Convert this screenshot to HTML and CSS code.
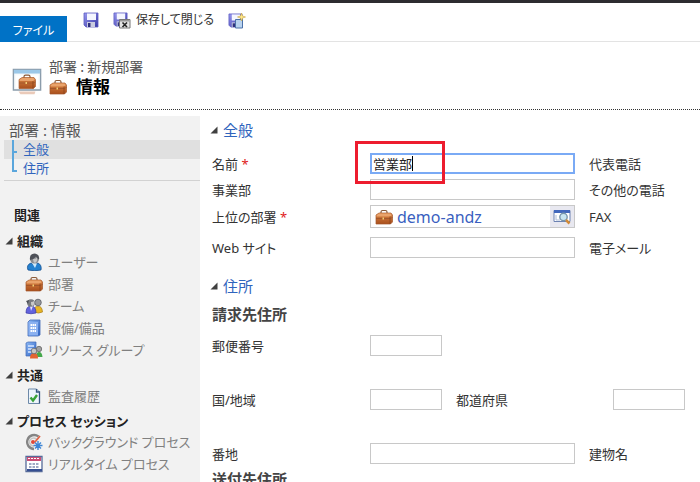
FILE: index.html
```html
<!DOCTYPE html>
<html lang="ja">
<head>
<meta charset="utf-8">
<title>部署 : 新規部署</title>
<link rel="stylesheet" href="styles.css">
</head>
<body>
<svg class="defs" aria-hidden="true">
  <defs>
    <linearGradient id="leather" x1="0" y1="0" x2="0" y2="1"><stop offset="0" stop-color="#d98445"/><stop offset="1" stop-color="#a94f1c"/></linearGradient>
    <linearGradient id="disk" x1="0" y1="0" x2="1" y2="1"><stop offset="0" stop-color="#9a9af0"/><stop offset="1" stop-color="#3535a5"/></linearGradient>
    <linearGradient id="sky" x1="0" y1="0" x2="1" y2="1"><stop offset="0" stop-color="#8fbaf5"/><stop offset="1" stop-color="#2b61c4"/></linearGradient>
  </defs>
  <symbol id="case" viewBox="0 0 18 16">
    <path d="M6 4.500V3q0-1.500 1.500-1.500h3q1.500 0 1.500 1.500v1.500" fill="none" stroke="#8a5a38" stroke-width="1.200"/>
    <path d="M1 6l3-2h12l1.500 2v7l-2 2H1z" fill="url(#leather)" stroke="#a5582b" stroke-width=".7"/>
    <path d="M1.500 6.300L4 4.500h11.500l1.300 1.800-1.800 1.200H1.500z" fill="#e9a36b"/>
    <path d="M1 9.500h14l2.500-1" fill="none" stroke="#96502a" stroke-width=".7"/>
    <path d="M15 7.500V15" stroke="#84401a" stroke-width=".7"/>
    <path d="M7.500 8.500H9v2H7.500z" fill="#f4cf74"/>
  </symbol>
  <symbol id="save" viewBox="0 0 16 16">
    <path d="M1 1h14v14H3l-2-2z" fill="url(#disk)" stroke="#5a5ac0" stroke-width=".8"/>
    <path d="M4 1.500h9V8H4z" fill="#f4f6ff"/>
    <path d="M4 10h8v5H4z" fill="#c9cbe0"/>
    <path d="M5 11h2.500v4H5z" fill="#30307e"/>
  </symbol>
  <symbol id="tri" viewBox="0 0 8 8"><path d="M7.500 0.500v7H.5z" fill="#404040"/></symbol>
</svg>

<div class="app">
  <header class="ribbon">
    <button class="file-tab" type="button">ファイル</button>
    <div class="tools">
      <button class="tool" type="button" aria-label="保存"><svg class="icon"><use href="#save"/></svg></button>
      <button class="tool" type="button">
        <svg class="icon-wide" viewBox="0 0 18 17"><use href="#save" width="15" height="15"/><path d="M6.500 7.500h10.500v8.500H6.500z" fill="#e4e4e4" stroke="#777"/><path d="M7 8h9.500v1.500H7z" fill="#999"/><path d="M9.500 10.500l4.500 4.500m0-4.500l-4.500 4.500" stroke="#222" stroke-width="1.600"/></svg>
        <span>保存して閉じる</span>
      </button>
      <button class="tool" type="button" aria-label="保存して新規作成">
        <svg class="icon-wide" viewBox="0 0 18 17"><use href="#save" y="1" width="15" height="15"/><path d="M7.500 7.500h7v8.500h-7z" fill="#b9d3ef" stroke="#4c71a8"/><path d="M13.500 1l1 3 3 1-3 1-1 3-1-3-3-1 3-1z" fill="#ffe98a" stroke="#c9a43b" stroke-width=".6"/></svg>
      </button>
    </div>
  </header>

  <div class="title-bar">
    <svg class="form-icon" viewBox="0 0 32 30"><path d="M1.500 1.500h29v22h-29z" fill="#f6fafc" stroke="#8b9cab" stroke-width="1.500"/><path d="M2 2h28v4H2z" fill="#9cc8e8"/><path d="M4 8h24v13H4z" fill="#fff"/><use href="#case" x="6" y="6" width="20" height="17"/><path d="M7 25h18l-1 3H9z" fill="#d69674" opacity=".5"/></svg>
    <div class="titles">
      <div class="record">部署 : 新規部署</div>
      <h1 class="form-name"><svg class="icon-case"><use href="#case"/></svg>情報</h1>
    </div>
  </div>

  <div class="body">
    <nav class="sidebar">
      <div class="side-title">部署 : 情報</div>
      <ul class="anchors">
        <li><a class="anchor current" href="#general">全般</a></li>
        <li><a class="anchor" href="#address">住所</a></li>
      </ul>
      <div class="related">関連</div>
      <h2 class="group"><svg class="tri"><use href="#tri"/></svg>組織</h2>
      <ul class="links">
        <li><a class="link" href="#users"><svg class="icon-side" viewBox="0 0 18 18"><path d="M3 17q-2-5 3-7l3 2 4-2q4 2 3 7-6 1.500-13 0z" fill="#2581cf" stroke="#175292" stroke-width=".8"/><path d="M7 10l3 5 2-4.500z" fill="#cde9fb"/><circle cx="9.500" cy="6" r="4.500" fill="#8b8d91"/><path d="M5 7q-1-6.500 5-6.500 5 1 4 6-2-1-3-3-2 3-6 3.500z" fill="#4e5158"/><path d="M8 6q3 0 4-1.500.8 4-2 5.500-2-1-2-4z" fill="#c6c6c6"/></svg>ユーザー</a></li>
        <li><a class="link" href="#units"><svg class="icon-side"><use href="#case"/></svg>部署</a></li>
        <li><a class="link" href="#teams"><svg class="icon-side" viewBox="0 0 18 18"><path d="M9 15q0-6 4-6t4.500 6q-4 2-8.500 0z" fill="#e8b525" stroke="#a87b17" stroke-width=".7"/><circle cx="13" cy="5.500" r="3.300" fill="#96989c" stroke="#5d6066" stroke-width=".8"/><path d="M1 16q0-7 5-7t5 7q-5 1.500-10 0z" fill="#6262de" stroke="#3b3ba4" stroke-width=".7"/><path d="M5 9l1 5 2-5z" fill="#e5e7ff"/><circle cx="6" cy="6" r="3.800" fill="#777a80"/><path d="M6 5q2 0 3-1 1 4-1.500 5Q5.500 8 6 5z" fill="#c9c9c9"/><path d="M1 4l3-1-1 4z" fill="#4b4e55"/></svg>チーム</a></li>
        <li><a class="link" href="#facilities"><svg class="icon-side" viewBox="0 0 18 18"><path d="M3 3l2-2h10v15l-2 1H3z" fill="url(#sky)" stroke="#4169b5" stroke-width=".8"/><path d="M3.500 3H13v13.500H3.500z" fill="#8bb1f0"/><path d="M5.500 6h5.500M5.500 9h5.500M5.500 12h5.500" stroke="#fff" stroke-width="1.800" stroke-dasharray="1.500 .5"/></svg>設備/備品</a></li>
        <li><a class="link" href="#resources"><svg class="icon-side" viewBox="0 0 18 18"><path d="M1 2l2-1h8v14H1z" fill="url(#sky)" stroke="#4169b5" stroke-width=".7"/><path d="M3 5h6M3 8h6M3 11h6" stroke="#d9e8ff" stroke-width="1.300"/><path d="M11 16q0-5 3-5t3.500 5z" fill="#45a84b"/><circle cx="14" cy="8" r="2.700" fill="#a1a1a1" stroke="#666" stroke-width=".8"/><path d="M5 17.500q0-5.500 4-5.500t4 5.500z" fill="#e46432"/><circle cx="9" cy="10" r="2.800" fill="#c7c7c7" stroke="#666" stroke-width=".8"/></svg>リソース グループ</a></li>
      </ul>
      <h2 class="group"><svg class="tri"><use href="#tri"/></svg>共通</h2>
      <ul class="links">
        <li><a class="link" href="#audit"><svg class="icon-side" viewBox="0 0 18 18"><path d="M3.500 2h8l3 3v11.500h-11z" fill="#edf4fc" stroke="#6d89a8"/><path d="M11.500 2v3h3v11.500" fill="none" stroke="#34557f" stroke-width="1.300"/><path d="M5.500 10.500l2.500 3 4-5.500" fill="none" stroke="#39a237" stroke-width="2.400"/></svg>監査履歴</a></li>
      </ul>
      <h2 class="group"><svg class="tri"><use href="#tri"/></svg>プロセス セッション</h2>
      <ul class="links">
        <li><a class="link" href="#background"><svg class="icon-side" viewBox="0 0 18 18"><path d="M13.500 3.500A7 7 0 1 0 9 16" fill="none" stroke="#858585" stroke-width="2.400"/><path d="M12 7a4 4 0 1 0-3 6" fill="none" stroke="#c6c6c6" stroke-width="1.500"/><circle cx="8" cy="9" r="2" fill="#df4938"/><path d="M10 9l5-6" stroke="#e06548" stroke-width="1.800"/><path d="M13 8v9M8.500 12.500h9M10 9.500l6 6m0-6l-6 6" stroke="#3e86d5" stroke-width="1.400"/></svg>バックグラウンド プロセス</a></li>
        <li><a class="link" href="#realtime"><svg class="icon-side" viewBox="0 0 18 18"><path d="M1 1.500h16v15H1z" fill="#fff" stroke="#566a99" stroke-width="1.300"/><path d="M2 2h14v4H2z" fill="#c94d75"/><path d="M3 3.500h12" stroke="#fff" stroke-dasharray="2 1"/><path d="M4 9h10M4 12h10" stroke="#7f8db1" stroke-width="1.700" stroke-dasharray="2.500 1"/><path d="M2 15h15" stroke="#364f92" stroke-width="2"/></svg>リアルタイム プロセス</a></li>
      </ul>
    </nav>

    <main class="form">
      <h2 class="section" id="general"><svg class="tri"><use href="#tri"/></svg>全般</h2>
      <div class="row">
        <label for="name">名前 <span class="required">*</span></label>
        <div class="field marked"><input class="focused" id="name" type="text" value="営業部"><span class="caret"></span></div>
        <span class="next">代表電話</span>
      </div>
      <div class="row">
        <label for="division">事業部</label>
        <div class="field"><input id="division" type="text"></div>
        <span class="next">その他の電話</span>
      </div>
      <div class="row">
        <label for="parent">上位の部署 <span class="required">*</span></label>
        <div class="field lookup">
          <svg class="icon-case"><use href="#case"/></svg>
          <input id="parent" type="text" value="demo-andz">
          <button class="find" type="button" aria-label="検索"><svg class="icon-find" viewBox="0 0 18 16"><path d="M1 1.500h16v11H1z" fill="#fff" stroke="#6c82b2"/><path d="M1 1h16v3H1z" fill="#4268bd"/><path d="M3 6v5h4" fill="none" stroke="#aebdd8"/><circle cx="10.500" cy="8" r="3.700" fill="#c9e6f2" stroke="#7895aa" stroke-width="1.400"/><path d="M13 11l3.500 3.500" stroke="#d18a37" stroke-width="2.500"/></svg></button>
        </div>
        <span class="next">FAX</span>
      </div>
      <div class="row spaced">
        <label for="web">Web サイト</label>
        <div class="field"><input id="web" type="text"></div>
        <span class="next">電子メール</span>
      </div>

      <h2 class="section second" id="address"><svg class="tri"><use href="#tri"/></svg>住所</h2>
      <h3 class="subhead">請求先住所</h3>
      <div class="row tall">
        <label for="zip">郵便番号</label>
        <div class="field short"><input id="zip" type="text"></div>
      </div>
      <div class="row tall triple">
        <label for="country">国/地域</label>
        <div class="field"><input id="country" type="text"></div>
        <label class="next" for="state">都道府県</label>
        <div class="field"><input id="state" type="text"></div>
      </div>
      <div class="row">
        <label for="street">番地</label>
        <div class="field"><input id="street" type="text"></div>
        <span class="next">建物名</span>
      </div>
      <h3 class="subhead">送付先住所</h3>
    </main>
  </div>
</div>
</body>
</html>
```

FILE: styles.css
```css
*, *::before, *::after { box-sizing: border-box; }

body {
  margin: 0;
  background: #fff;
  color: #333;
  font: 13px/20px "Noto Sans", "Noto Sans CJK JP", sans-serif;
  font-feature-settings: "palt";
}

ul, h1, h2, h3 { margin: 0; padding: 0; list-style: none; }
a { color: inherit; text-decoration: none; }
button, input { font: inherit; font-feature-settings: inherit; color: inherit; }
button { border: 0; padding: 0; background: none; }
svg { flex: none; }

.defs { position: absolute; width: 0; height: 0; }

.app {
  display: flex;
  flex-direction: column;
  height: 100vh;
  overflow: hidden;
  border-top: 3px solid #2d2c30;
}

.ribbon {
  display: flex;
  align-items: flex-end;
  flex: none;
  height: 39px;
  border-bottom: 1px solid #e3e3e3;
}
.file-tab {
  width: 67px;
  height: 26px;
  margin-bottom: -1px;
  padding-top: 4px;
  background: #0072c6;
  color: #fff;
  font-size: 12px;
}
.tools {
  display: flex;
  align-items: center;
  gap: 14px;
  padding: 0 0 11px 16px;
}
.tool { display: flex; align-items: center; gap: 5px; height: 20px; font-size: 12px; }
.icon { width: 16px; height: 16px; }
.icon-wide { width: 18px; height: 17px; }
.icon-case { width: 18px; height: 16px; }

.title-bar {
  display: flex;
  gap: 7px;
  flex: none;
  height: 68px;
  padding: 14px 12px 0;
  border-bottom: 1px dotted #333;
}
.form-icon { width: 30px; height: 30px; margin-top: 11px; }
.record { color: #555; font-size: 14px; font-family: "Noto Sans CJK JP", sans-serif; font-feature-settings: normal; }
.form-name {
  display: flex;
  align-items: center;
  gap: 9px;
  color: #000;
  font-size: 17px;
  line-height: 22px;
}

.body { display: flex; flex: 1 0 auto; padding-top: 6px; }

.sidebar {
  flex: none;
  width: 200px;
  padding: 4px 0 8px 4px;
  background: #f2f2f2;
}
.side-title { padding-left: 5px; color: #555; font-size: 15px; }
.anchors { padding-bottom: 2px; border-bottom: 1px solid #d2d2d2; }
.anchor {
  position: relative;
  display: block;
  padding-left: 19px;
  color: #2f64bd;
  line-height: 19px;
}
.anchor.current { background: #e0e0e0; }
.anchor::before {
  content: "";
  position: absolute;
  left: 8px;
  top: 0;
  width: 5px;
  height: 13px;
  border: solid #5aa6dc;
  border-width: 0 0 2px 2px;
}
.anchor.current::after {
  content: "";
  position: absolute;
  left: 8px;
  top: 11px;
  width: 2px;
  height: 8px;
  background: #5aa6dc;
}
.related { padding: 24px 0 6px 10px; color: #222; font-weight: 700; }
.group {
  display: flex;
  align-items: center;
  gap: 4px;
  padding-left: 1px;
  color: #222;
  font-size: 13px;
  line-height: 20px;
}
.tri { width: 8px; height: 8px; }
.links { padding-bottom: 4px; }
.link {
  display: flex;
  align-items: center;
  gap: 5px;
  padding-left: 21px;
  color: #808080;
  line-height: 22px;
}
.icon-side { width: 18px; height: 18px; }

.form { flex: 1; min-width: 0; padding: 4px 0 0 10px; }
.section {
  display: flex;
  align-items: center;
  gap: 5px;
  margin-bottom: 13px;
  color: #2f64bd;
  font-size: 15px;
  font-weight: 400;
  line-height: 20px;
}
.section.second { margin: 18px 0 8px; }
.subhead {
  padding-left: 2px;
  margin-bottom: 11px;
  color: #444;
  font-size: 15px;
  line-height: 20px;
}

.row {
  display: grid;
  grid-template-columns: 158px minmax(120px, 205px) 1fr;
  align-items: center;
  min-height: 21px;
  margin-bottom: 5px;
  padding-left: 2px;
}
.row.spaced { margin-top: 9px; }
.row.tall { margin-bottom: 33px; }
.row.triple { grid-template-columns: 158px 72px 171px 72px; }
.next { padding-left: 14px; }
.required { color: #e02020; }

.field { position: relative; }
.field.short { width: 72px; }
.field input {
  display: block;
  width: 100%;
  height: 21px;
  padding: 0 2px;
  border: 1px solid #c8c8c8;
  background: #fff;
  color: #222;
  outline: 0;
}
.field input.focused { border: 2px solid #7aaaf5; padding: 0 1px; }
.marked { z-index: 1; }
.marked::after {
  content: "";
  position: absolute;
  left: -15px;
  top: -12px;
  width: 90px;
  height: 43px;
  border: 3px solid #ed1c2e;
  pointer-events: none;
}
.caret {
  position: absolute;
  left: 42px;
  top: 3px;
  width: 1px;
  height: 15px;
  background: #000;
}
.lookup {
  display: flex;
  align-items: center;
  gap: 2px;
  height: 23px;
  padding-left: 4px;
  border: 1px solid #c8c8c8;
}
.field.lookup input {
  flex: 1;
  min-width: 0;
  border: 0;
  color: #3a5fc0;
  font-size: 16px;
}
.find {
  display: flex;
  align-items: center;
  justify-content: center;
  width: 24px;
  height: 21px;
  background: #e8e8f0;
}
.icon-find { width: 18px; height: 16px; }
```
